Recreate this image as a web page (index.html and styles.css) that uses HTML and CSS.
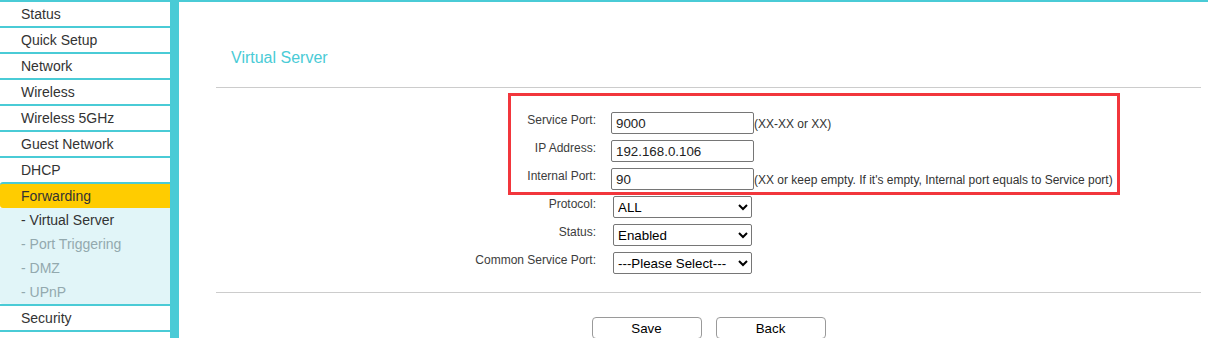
FILE: index.html
```html
<!DOCTYPE html>
<html lang="en">
<head>
    <meta charset="UTF-8">
    <meta name="viewport" content="width=device-width, initial-scale=1.0">
    <title>Virtual Server</title>
    <link rel="stylesheet" href="styles.css">
</head>
<body>
<div class="page">
    <ul class="menu">
        <li class="menu-item">Status</li>
        <li class="menu-item">Quick Setup</li>
        <li class="menu-item">Network</li>
        <li class="menu-item">Wireless</li>
        <li class="menu-item">Wireless 5GHz</li>
        <li class="menu-item">Guest Network</li>
        <li class="menu-item">DHCP</li>
        <li class="menu-item active">Forwarding</li>
        <li class="submenu">
            <div class="sub-item current">- Virtual Server</div>
            <div class="sub-item">- Port Triggering</div>
            <div class="sub-item">- DMZ</div>
            <div class="sub-item">- UPnP</div>
        </li>
        <li class="menu-item last">Security</li>
    </ul>

    <div class="main">
        <h2 class="title">Virtual Server</h2>
        <hr class="rule">

        <form class="vs-form">
            <label for="servicePort">Service Port:</label>
            <div class="field">
                <input type="text" id="servicePort" value="9000">
                <span class="hint">(XX-XX or XX)</span>
            </div>

            <label for="ipAddress">IP Address:</label>
            <div class="field">
                <input type="text" id="ipAddress" value="192.168.0.106">
            </div>

            <label for="internalPort">Internal Port:</label>
            <div class="field">
                <input type="text" id="internalPort" value="90">
                <span class="hint">(XX or keep empty. If it's empty, Internal port equals to Service port)</span>
            </div>

            <label for="protocol">Protocol:</label>
            <div class="field">
                <select id="protocol">
                    <option>ALL</option>
                    <option>TCP</option>
                    <option>UDP</option>
                </select>
            </div>

            <label for="status">Status:</label>
            <div class="field">
                <select id="status">
                    <option>Enabled</option>
                    <option>Disabled</option>
                </select>
            </div>

            <label for="commonPort">Common Service Port:</label>
            <div class="field">
                <select id="commonPort">
                    <option>---Please Select---</option>
                    <option>DNS</option>
                    <option>FTP</option>
                    <option>HTTP</option>
                </select>
            </div>
        </form>

        <hr class="rule rule-bottom">

        <div class="actions">
            <button type="button">Save</button>
            <button type="button">Back</button>
        </div>

        <div class="highlight"></div>
    </div>
</div>
</body>
</html>
```

FILE: styles.css
```css
html, body {
    margin: 0;
    padding: 0;
    overflow: hidden;
}
body {
    font-family: "Liberation Sans", Arial, sans-serif;
    color: #333;
    background: #fff;
}
.page {
    display: flex;
    height: 338px;
}

/* left menu */
.menu {
    list-style: none;
    margin: 0;
    padding: 0;
    width: 170px;
    border-right: 9px solid #4acbd6;
    flex-shrink: 0;
}
.menu-item {
    border-top: 2px solid #4acbd6;
    height: 24px;
    line-height: 24px;
    padding-left: 21px;
    font-size: 14px;
    color: #333;
}
.menu-item.last {
    border-bottom: 2px solid #4acbd6;
}
.menu-item.active {
    background-color: #ffcc00;
    border-radius: 3px 0 0 3px;
}
.submenu {
    background-color: #e1f5f8;
    border-radius: 0 0 0 3px;
}
.sub-item {
    height: 24px;
    line-height: 24px;
    padding-left: 21px;
    font-size: 14px;
    color: #93a9ae;
}
.sub-item.current {
    color: #333;
}

/* main area */
.main {
    flex: 1;
    position: relative;
    border-top: 2px solid #4acbd6;
    padding: 0 7px 0 37px;
}
.title {
    margin: 46px 0 0;
    padding-left: 15px;
    font-size: 16px;
    font-weight: normal;
    line-height: 20px;
    color: #4acbd6;
}
.rule {
    margin: 19px 0 0;
    border: 0;
    border-top: 1px solid #ccc;
    height: 0;
}
.rule-bottom {
    margin-top: 12px;
}

.vs-form {
    margin-top: 24px;
    display: grid;
    grid-template-columns: 380px 1fr;
    grid-auto-rows: 28px;
    column-gap: 15px;
}
.vs-form label {
    text-align: right;
    font-size: 12px;
    line-height: 16px;
    color: #3c3c3c;
}
.field {
    display: flex;
    align-items: center;
    height: 22px;
}
.field input {
    box-sizing: border-box;
    width: 143px;
    height: 22px;
    margin: 0;
    padding: 1px 4px;
    border: 1px solid #767676;
    border-radius: 2px;
    font-family: "Liberation Sans", Arial, sans-serif;
    font-size: 13.333px;
    color: #222;
}
.field select {
    box-sizing: border-box;
    width: 139px;
    height: 22px;
    margin: 0 0 0 2px;
    border: 1px solid #767676;
    border-radius: 2px;
    background: #fff;
    font-family: "Liberation Sans", Arial, sans-serif;
    font-size: 13.333px;
    color: #000;
}
.hint {
    font-size: 12px;
    color: #333;
    padding-top: 2px;
    white-space: nowrap;
}

.actions {
    margin-top: 24px;
    display: flex;
    justify-content: center;
    gap: 14px;
}
.actions button {
    width: 110px;
    height: 22px;
    background: #fff;
    border: 1px solid #9a9a9a;
    border-radius: 4px;
    font-family: "Liberation Sans", Arial, sans-serif;
    font-size: 13.333px;
    color: #000;
    cursor: pointer;
}

/* red annotation box over the port fields */
.highlight {
    position: absolute;
    top: 91px;
    left: 329px;
    width: 612px;
    height: 102px;
    box-sizing: border-box;
    border: 3px solid #f2363c;
    pointer-events: none;
}
```
